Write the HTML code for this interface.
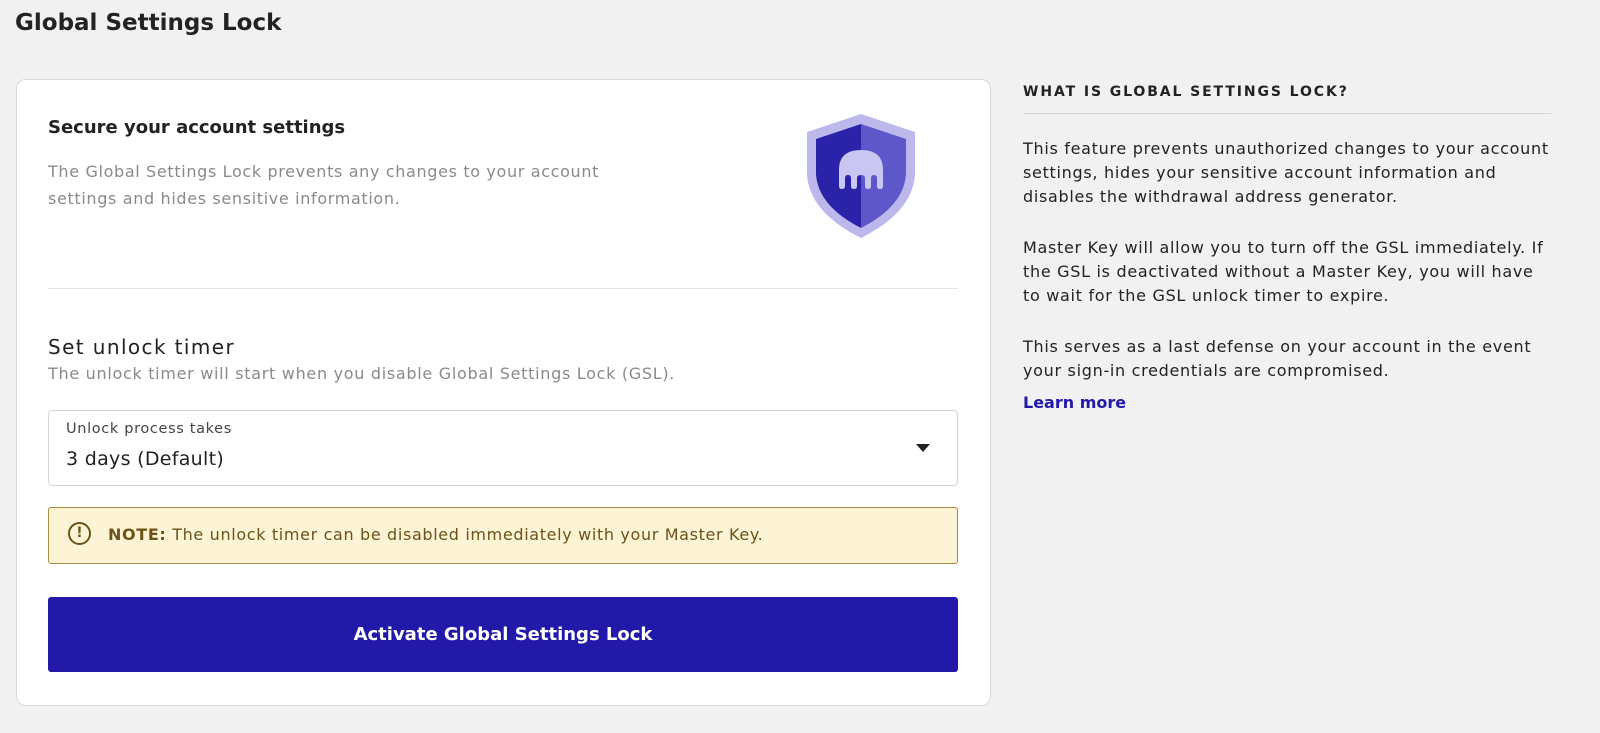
<!DOCTYPE html>
<html><head><style>
body{margin:0;width:1600px;height:733px;background:#f1f1f1;font-family:"DejaVu Sans","Liberation Sans",sans-serif;color:#1a1a1a;position:relative;overflow:hidden}
.a{position:absolute;white-space:nowrap}
</style></head><body>
<div class="a" style="left:15px;top:10px;font-size:23px;font-weight:bold;color:#222">Global Settings Lock</div>
<div class="a" style="left:16px;top:79px;width:973px;height:625px;background:#fff;border:1px solid #d9d9d9;border-radius:10px"></div>
<div class="a" style="left:48px;top:117px;font-size:18px;font-weight:bold;color:#222">Secure your account settings</div>
<div class="a" style="left:48px;top:158px;font-size:16px;line-height:27px;color:#8a8a8a;letter-spacing:0.65px">The Global Settings Lock prevents any changes to your account<br>settings and hides sensitive information.</div>
<svg class="a" style="left:805px;top:112px" width="112" height="128" viewBox="0 0 112 128">
<path d="M56 2 L110 20 L110 62 Q108 100 56 126 Q4 100 2 62 L2 20 Z" fill="#bcb8ec"/>
<path d="M56 12 L101 27 L101 62 Q99 94 56 116 Z" fill="#5d57c9"/>
<path d="M56 12 L11 27 L11 62 Q13 94 56 116 Z" fill="#2a22a9"/>
<path d="M34 74 L34 58 Q34 38 56 38 Q78 38 78 58 L78 74 Q78 77 75 77 Q72 77 72 74 L72 66 Q72 63 69 63 Q66 63 66 66 L66 74 Q66 77 63 77 Q60 77 60 74 L60 66 Q60 63 56 63 Q52 63 52 66 L52 74 Q52 77 49 77 Q46 77 46 74 L46 66 Q46 63 43 63 Q40 63 40 66 L40 74 Q40 77 37 77 Q34 77 34 74 Z" fill="#c9c6f2"/>
</svg>
<div class="a" style="left:48px;top:288px;width:910px;height:1px;background:#e3e3e3"></div>
<div class="a" style="left:48px;top:335px;font-size:20px;color:#222;letter-spacing:1.4px">Set unlock timer</div>
<div class="a" style="left:48px;top:364px;font-size:16px;color:#8a8a8a;letter-spacing:0.7px">The unlock timer will start when you disable Global Settings Lock (GSL).</div>
<div class="a" style="left:48px;top:410px;width:908px;height:74px;border:1px solid #d4d4d4;border-radius:4px"></div>
<div class="a" style="left:66px;top:421px;font-size:14.5px;color:#444;letter-spacing:0.65px">Unlock process takes</div>
<div class="a" style="left:66px;top:448px;font-size:19px;color:#222;letter-spacing:0.3px">3 days (Default)</div>
<div class="a" style="left:916px;top:444px;width:0;height:0;border-left:7px solid transparent;border-right:7px solid transparent;border-top:8px solid #222"></div>
<div class="a" style="left:48px;top:507px;width:908px;height:55px;background:#fdf4d6;border:1px solid #a88c45;border-radius:3px"></div>
<div class="a" style="left:68px;top:522px;width:23px;height:23px;border:2px solid #6b5318;border-radius:50%;box-sizing:border-box;text-align:center;font-weight:bold;font-size:14px;line-height:19px;color:#6b5318">!</div>
<div class="a" style="left:108px;top:525px;font-size:16px;color:#6b5318;letter-spacing:0.65px"><b>NOTE:</b> The unlock timer can be disabled immediately with your Master Key.</div>
<div class="a" style="left:48px;top:597px;width:910px;height:75px;background:#2219a8;border-radius:3px;color:#fff;font-weight:bold;font-size:18px;text-align:center;line-height:75px">Activate Global Settings Lock</div>
<div class="a" style="left:1023px;top:84px;font-size:14px;font-weight:bold;letter-spacing:1.9px;color:#222">WHAT IS GLOBAL SETTINGS LOCK?</div>
<div class="a" style="left:1023px;top:113px;width:528px;height:1px;background:#d4d4d4"></div>
<div class="a" style="left:1023px;top:137px;font-size:16px;line-height:24px;color:#222;letter-spacing:0.7px">
<p style="margin:0 0 27px">This feature prevents unauthorized changes to your account<br>settings, hides your sensitive account information and<br>disables the withdrawal address generator.</p>
<p style="margin:0 0 27px">Master Key will allow you to turn off the GSL immediately. If<br>the GSL is deactivated without a Master Key, you will have<br>to wait for the GSL unlock timer to expire.</p>
<p style="margin:0">This serves as a last defense on your account in the event<br>your sign-in credentials are compromised.</p>
<div style="color:#2219a8;font-weight:bold;margin-top:8px;letter-spacing:0">Learn more</div>
</div>
</body></html>
